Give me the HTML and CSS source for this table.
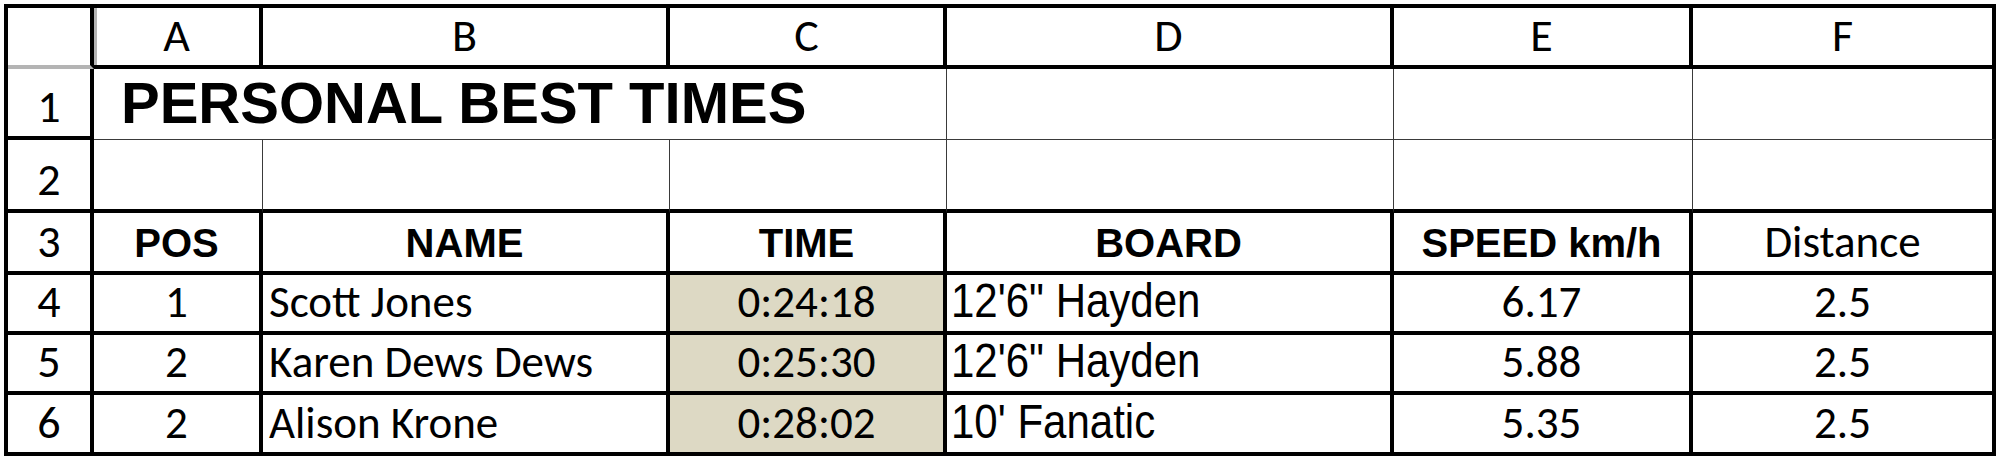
FILE: index.html
```html
<!DOCTYPE html>
<html>
<head>
<meta charset="utf-8">
<title>Personal Best Times</title>
<link rel="stylesheet" href="styles.css">
</head>
<body>
<div class="sheet">
  <div class="c corner"></div>
  <div class="c colh">A</div>
  <div class="c colh">B</div>
  <div class="c colh">C</div>
  <div class="c colh">D</div>
  <div class="c colh">E</div>
  <div class="c colh">F</div>

  <div class="c rowh">1</div>
  <div class="c title tb tr">PERSONAL BEST TIMES</div>
  <div class="c tb tr"></div>
  <div class="c tb tr"></div>
  <div class="c tb"></div>

  <div class="c rowh">2</div>
  <div class="c tr"></div>
  <div class="c tr"></div>
  <div class="c tr"></div>
  <div class="c tr"></div>
  <div class="c tr"></div>
  <div class="c"></div>

  <div class="c rowh">3</div>
  <div class="c hd">POS</div>
  <div class="c hd">NAME</div>
  <div class="c hd">TIME</div>
  <div class="c hd">BOARD</div>
  <div class="c hd">SPEED km/h</div>
  <div class="c num">Distance</div>

  <div class="c rowh">4</div>
  <div class="c num">1</div>
  <div class="c txt">Scott Jones</div>
  <div class="c num time">0:24:18</div>
  <div class="c board"><span class="narrow">12'6" Hayden</span></div>
  <div class="c num">6.17</div>
  <div class="c num">2.5</div>

  <div class="c rowh">5</div>
  <div class="c num">2</div>
  <div class="c txt">Karen Dews Dews</div>
  <div class="c num time">0:25:30</div>
  <div class="c board"><span class="narrow">12'6" Hayden</span></div>
  <div class="c num">5.88</div>
  <div class="c num">2.5</div>

  <div class="c rowh">6</div>
  <div class="c num">2</div>
  <div class="c txt">Alison Krone</div>
  <div class="c num time">0:28:02</div>
  <div class="c board"><span class="narrow">10' Fanatic</span></div>
  <div class="c num">5.35</div>
  <div class="c num">2.5</div>
</div>
</body>
</html>
```

FILE: styles.css
```css
html, body {
  margin: 0;
  padding: 0;
  background: #ffffff;
}

body {
  padding: 4px;
}

.sheet {
  display: grid;
  grid-template-columns: 86px 169px 407px 277px 447px 299px 303px;
  grid-template-rows: 61px 71px 73px 62px 60px 60px 61px;
  border-left: 4px solid #000;
  border-top: 4px solid #000;
  width: 1988px;
  color: #000;
  font-family: Carlito, Lato, sans-serif;
  font-size: 45px;
  line-height: 1;
}

.c {
  box-sizing: border-box;
  border-right: 4px solid #000;
  border-bottom: 4px solid #000;
  display: flex;
  align-items: flex-end;
  justify-content: center;
  padding-bottom: 7px;
  white-space: nowrap;
}

.tr {
  border-right: 1px solid #3a3a3a;
}

.tb {
  border-bottom: 1px solid #3a3a3a;
}

.corner {
  border-bottom: 4px solid #b4b4b4;
  box-shadow: 3px 0 0 #b4b4b4;
}

.colh,
.rowh {
  font-size: 46px;
}

.title {
  grid-column: span 3;
  justify-content: flex-start;
  padding-left: 27px;
  padding-bottom: 7px;
  font-family: "Liberation Sans", Arial, sans-serif;
  font-weight: bold;
  font-size: 58px;
}

.hd {
  font-family: "Liberation Sans", Arial, sans-serif;
  font-weight: bold;
  font-size: 40px;
  padding-bottom: 8px;
}

.txt {
  justify-content: flex-start;
  padding-left: 6px;
}

.board {
  justify-content: flex-start;
  padding-left: 4px;
  padding-bottom: 6px;
  font-family: "Liberation Sans", Arial, sans-serif;
  font-size: 48px;
}

.narrow {
  display: inline-block;
  transform: scaleX(0.875);
  transform-origin: left bottom;
}

.time {
  background: #ddd9c4;
}
```
